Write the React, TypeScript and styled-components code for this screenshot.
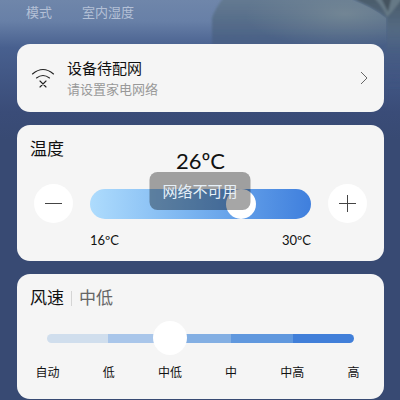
import React, { useState } from "react";
import styled, { createGlobalStyle } from "styled-components";

const GlobalStyle = createGlobalStyle`
  body { margin: 0; background: #384a73; }
  *, *::before, *::after { box-sizing: border-box; }
  button, input { font: inherit; color: inherit; }
`;

const Page = styled.div`
  position: relative;
  font-family: Lato, "Noto Sans CJK SC", sans-serif;
  color: #111;
  overflow: hidden;
  padding: 0 16px 1px 17px;
`;

const Backdrop = styled.svg`
  position: absolute;
  top: 0;
  left: 0;
  width: 100%;
  height: 140px;
`;

const Content = styled.div`
  position: relative;
`;

const Metrics = styled.header`
  display: flex;
  gap: 30px;
  height: 44px;
  padding: 2px 9px;
  font-size: 13px;
  line-height: 20px;
  font-weight: 400;
  color: #b4c0d6;
`;

const Cards = styled.main`
  display: grid;
  gap: 13px;
`;

const Card = styled.section`
  background: #f5f5f5;
  border-radius: 13px;
`;

const NetworkButton = styled.button`
  display: flex;
  align-items: center;
  gap: 12px;
  width: 100%;
  height: 68px;
  padding: 0 16px 0 14px;
  border: 0;
  border-radius: 13px;
  background: #f5f5f5;
  text-align: left;
`;

const NetworkText = styled.span`
  display: grid;
  flex: 1;
`;

const NetworkTitle = styled.span`
  font-size: 15px;
  line-height: 22px;
`;

const NetworkHint = styled.span`
  font-size: 13px;
  line-height: 20px;
  color: #999;
`;

const TemperatureCard = styled(Card)`
  padding: 12px 17px 12px;
`;

const Title = styled.h2`
  margin: 0;
  font-size: 17px;
  line-height: 24px;
  font-weight: 400;
`;

const TemperatureTitle = styled(Title)`
  margin-left: -4px;
`;

const Value = styled.output`
  display: block;
  height: 28px;
  margin-top: -14px;
  font-size: 22px;
  line-height: 28px;
  text-align: center;
`;

const Adjust = styled.div`
  display: grid;
  grid-template-columns: 39px 1fr 39px;
  column-gap: 17px;
  row-gap: 8px;
  align-items: center;
  margin-top: 9px;
`;

const RoundButton = styled.button`
  display: grid;
  place-items: center;
  width: 39px;
  height: 39px;
  padding: 0;
  border: 0;
  border-radius: 50%;
  background: #fff;
`;

const TemperatureRange = styled.input`
  appearance: none;
  width: 100%;
  height: 30px;
  margin: 0;
  border-radius: 15px;
  background: linear-gradient(90deg, #aedcfd, #7ab4f0 45%, #3f7fdd);
  &::-webkit-slider-thumb {
    appearance: none;
    width: 30px;
    height: 30px;
    border-radius: 50%;
    background: #fff;
  }
`;

const Limits = styled.div`
  grid-column: 2;
  display: flex;
  justify-content: space-between;
  font-size: 13px;
  line-height: 18px;
`;

const FanCard = styled(Card)`
  padding: 12px 0 16px;
`;

const FanHeader = styled.div`
  display: flex;
  align-items: center;
  padding: 0 13px;
`;

const FanLevel = styled.span`
  margin-left: 7px;
  font-size: 17px;
  line-height: 24px;
  color: #666;
`;

const Divider = styled.span`
  width: 1px;
  height: 15px;
  margin-left: 7px;
  background: #d5d5d5;
`;

const FanSlider = styled.div`
  display: grid;
  align-items: center;
  margin-top: 11px;
  > * { grid-area: 1 / 1; }
`;

const Segments = styled.div`
  display: flex;
  height: 9px;
  margin: 0 30px;
  border-radius: 5px;
  overflow: hidden;
`;

const Segment = styled.span<{ $color: string }>`
  flex: 1;
  background: ${(p) => p.$color};
`;

const FanRange = styled.input`
  appearance: none;
  height: 34px;
  margin: 0 13px;
  background: transparent;
  &::-webkit-slider-thumb {
    appearance: none;
    width: 34px;
    height: 34px;
    border-radius: 50%;
    background: #fff;
  }
`;

const FanLabels = styled.div`
  display: grid;
  grid-template-columns: repeat(6, 1fr);
  margin-top: 8px;
  font-size: 12px;
  line-height: 20px;
  text-align: center;
`;

const Toast = styled.div`
  position: absolute;
  top: 172px;
  left: 50%;
  transform: translateX(-50%);
  padding: 8px 13px;
  border-radius: 8px;
  background: rgba(0, 0, 0, 0.35);
  color: #e6f0f8;
  font-size: 15px;
  line-height: 22px;
  white-space: nowrap;
  pointer-events: none;
`;

const levels = ["自动", "低", "中低", "中", "中高", "高"];
const segmentColors = ["#d0deed", "#a9c6ea", "#83afe3", "#6098de", "#417fd9"];

const SofaBackdrop = () => (
  <Backdrop viewBox="0 0 400 140" preserveAspectRatio="none" aria-hidden="true">
    <defs>
      <linearGradient id="base" x1="0" y1="0" x2="0" y2="1">
        <stop offset="0" stopColor="#6f86aa" />
        <stop offset="0.15" stopColor="#6880a7" />
        <stop offset="0.34" stopColor="#48608f" />
        <stop offset="0.8" stopColor="#3a4c78" />
        <stop offset="1" stopColor="#384a73" />
      </linearGradient>
      <linearGradient id="cushion" gradientUnits="userSpaceOnUse" x1="0" y1="0" x2="0" y2="110">
        <stop offset="0" stopColor="#647a91" />
        <stop offset="0.2" stopColor="#566d8a" />
        <stop offset="0.4" stopColor="#485f86" />
        <stop offset="1" stopColor="#3a4c78" stopOpacity="0" />
      </linearGradient>
      <radialGradient id="sheen">
        <stop offset="0" stopColor="#82939a" stopOpacity="0.6" />
        <stop offset="0.5" stopColor="#7c8e98" stopOpacity="0.3" />
        <stop offset="1" stopColor="#7c8e98" stopOpacity="0" />
      </radialGradient>
      <linearGradient id="shade" x1="0" y1="0" x2="0" y2="1">
        <stop offset="0" stopColor="#4a5a67" />
        <stop offset="0.35" stopColor="#536981" />
        <stop offset="1" stopColor="#3a4c78" stopOpacity="0" />
      </linearGradient>
      <clipPath id="cushionShape">
        <path d="M222 0H352Q372 7 386 18L387 110H212V18Q215 8 222 0Z" />
      </clipPath>
      <filter id="soft"><feGaussianBlur stdDeviation="1" /></filter>
    </defs>
    <rect width="400" height="140" fill="url(#base)" />
    <g filter="url(#soft)">
      <path d="M346 -6H406V90H386V18Z" fill="url(#shade)" />
      <path d="M372 -4Q383 6 387 17Q394 10 404 -4Z" fill="#667986" />
      <path d="M380 -4L388 12L392 -4Z" fill="#44535f" />
      <path d="M225 -4H344Q370 4 387 18V110H212V18Q215 8 225 -4Z" fill="url(#cushion)" />
    </g>
    <g clipPath="url(#cushionShape)">
      <ellipse cx="345" cy="14" rx="100" ry="34" fill="url(#sheen)" />
    </g>
  </Backdrop>
);

export default function App() {
  const [temperature, setTemperature] = useState(26);
  const [fan, setFan] = useState(2);
  return (
    <>
      <GlobalStyle />
      <Page>
        <SofaBackdrop />
        <Content>
          <Metrics>
            <span>模式</span>
            <span>室内湿度</span>
          </Metrics>
          <Cards>
            <NetworkButton type="button">
              <svg width="24" height="24" viewBox="0 0 24 24" fill="none" stroke="#222" strokeWidth="1.1" strokeLinecap="round" aria-hidden="true">
                <path d="M1.500 8Q12 -1 22.500 8M5.500 12Q12 7 18.500 12M9 15L15 21M15 15L9 21" />
              </svg>
              <NetworkText>
                <NetworkTitle>设备待配网</NetworkTitle>
                <NetworkHint>请设置家电网络</NetworkHint>
              </NetworkText>
              <svg width="8" height="14" viewBox="0 0 8 14" fill="none" stroke="#666" aria-hidden="true">
                <path d="M1 1L7 7L1 13" />
              </svg>
            </NetworkButton>
            <TemperatureCard>
              <TemperatureTitle>温度</TemperatureTitle>
              <Value htmlFor="temperature">{temperature}ºC</Value>
              <Adjust>
                <RoundButton type="button" aria-label="降低温度" onClick={() => setTemperature(Math.max(16, temperature - 1))}>
                  <svg width="17" height="17" viewBox="0 0 17 17" stroke="#444" aria-hidden="true"><path d="M0 8.500H17" /></svg>
                </RoundButton>
                <TemperatureRange id="temperature" type="range" aria-label="温度" min={16} max={30} value={temperature} onChange={(e) => setTemperature(Number(e.target.value))} />
                <RoundButton type="button" aria-label="升高温度" onClick={() => setTemperature(Math.min(30, temperature + 1))}>
                  <svg width="17" height="17" viewBox="0 0 17 17" stroke="#444" aria-hidden="true"><path d="M0 8.500H17M8.500 0V17" /></svg>
                </RoundButton>
                <Limits><span>16ºC</span><span>30ºC</span></Limits>
              </Adjust>
            </TemperatureCard>
            <FanCard>
              <FanHeader>
                <Title>风速</Title>
                <Divider />
                <FanLevel>{levels[fan]}</FanLevel>
              </FanHeader>
              <FanSlider>
                <Segments>
                  {segmentColors.map((color) => <Segment key={color} $color={color} />)}
                </Segments>
                <FanRange type="range" aria-label="风速" min={0} max={5} value={fan} onChange={(e) => setFan(Number(e.target.value))} />
              </FanSlider>
              <FanLabels>
                {levels.map((level) => <span key={level}>{level}</span>)}
              </FanLabels>
            </FanCard>
          </Cards>
        </Content>
        <Toast role="status">网络不可用</Toast>
      </Page>
    </>
  );
}
